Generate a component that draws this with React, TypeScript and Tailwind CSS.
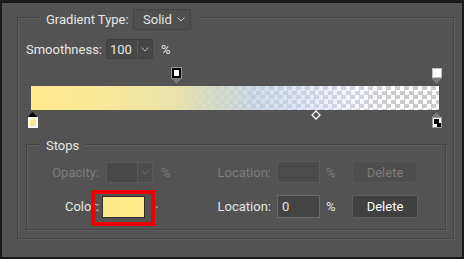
import React from "react";

function Chevron({ className = "" }: { className?: string }) {
  return (
    <svg width="8" height="5" viewBox="0 0 8 5" className={className}>
      <polyline points="0.5,0.5 4,4 7.5,0.5" fill="none" stroke="currentColor" strokeWidth="1" />
    </svg>
  );
}

function TriDown({ color }: { color: string }) {
  return (
    <svg width="11" height="6" viewBox="0 0 11 6">
      <polygon points="0,0 11,0 5.5,6" fill={color} />
    </svg>
  );
}

function TriUp({ color }: { color: string }) {
  return (
    <svg width="11" height="6" viewBox="0 0 11 6">
      <polygon points="0,6 11,6 5.5,0" fill={color} />
    </svg>
  );
}

export default function App() {
  return (
    <div className="w-[464px] h-[259px] bg-[#535353] border-t-[3px] border-b-[2px] border-l-2 border-r-2 border-[#1a1a1a] pt-[14px] pl-[15px] font-[Roboto,sans-serif] text-[13px] text-[#e6e6e6] overflow-hidden leading-none">
      <div className="w-[437px] h-[222px] border border-[#444444] shadow-[inset_1px_1px_0_#5e5e5e,1px_1px_0_#5e5e5e] flex flex-col">
        {/* Header: Gradient Type */}
        <div className="-mt-[9px] ml-[22px] px-[6px] bg-[#535353] w-fit h-[21px] flex items-center">
          <span className="w-[87px]">Gradient Type:</span>
          <div className="w-[58px] h-[21px] rounded-[2px] border border-[#434343] bg-[#4f4f4f] flex items-center pl-[9px] pr-[5px] justify-between">
            <span>Solid</span>
            <Chevron className="text-[#cfcfcf]" />
          </div>
        </div>

        {/* Smoothness */}
        <div className="mt-[9px] ml-[8px] h-[20px] flex items-center">
          <span className="w-[80px]">Smoothness:</span>
          <div className="w-[47px] h-[20px] flex border border-[#3f3f3f] bg-[#474747] rounded-[2px]">
            <div className="w-[31px] h-full flex items-center pl-[3px] border-r border-[#5b5b5b]">100</div>
            <div className="flex-1 flex items-center justify-center text-[#bdbdbd]">
              <Chevron />
            </div>
          </div>
          <span className="ml-[8px]">%</span>
        </div>

        {/* Gradient editor */}
        <div className="mt-[9px] ml-[13px] w-[408px] h-[60px] relative">
          {/* opacity stops */}
          <div className="absolute left-[141px] top-0 w-[9px] h-[10px] border-2 border-black bg-white outline outline-1 outline-[#9a9a9a]" />
          <div className="absolute left-[140px] top-[10px]">
            <TriDown color="#7a7a7a" />
          </div>
          <div className="absolute left-[401px] top-0 w-[10px] h-[10px] bg-white border border-[#bdbdbd]" />
          <div className="absolute left-[400px] top-[10px]">
            <TriDown color="#7a7a7a" />
          </div>

          {/* bar */}
          <div className="absolute left-0 top-[18px] w-[408px] h-[24px] bg-[conic-gradient(#cbcbcb_25%,#ffffff_0_50%,#cbcbcb_0_75%,#ffffff_0)] bg-[length:9px_9px]">
            <div className="w-full h-full bg-[linear-gradient(to_right,rgba(255,233,140,1)_0%,rgba(250,232,148,1)_15%,rgba(234,228,172,1)_35%,rgba(208,216,196,0.9)_45%,rgba(192,206,224,0.72)_55%,rgba(206,216,248,0.55)_67%,rgba(228,232,255,0.32)_79%,rgba(255,255,255,0)_91%)]" />
          </div>

          {/* color stops */}
          <div className="absolute left-[-4px] top-[44px]">
            <TriUp color="#000000" />
          </div>
          <div className="absolute left-[-3px] top-[49px] w-[10px] h-[11px] bg-white p-[2px]">
            <div className="w-full h-full bg-[#fbe68e]" />
          </div>
          <div className="absolute left-[280px] top-[42px]">
            <svg width="10" height="10" viewBox="0 0 10 10">
              <polygon points="5,1 9,5 5,9 1,5" fill="none" stroke="#ffffff" strokeWidth="1.3" />
            </svg>
          </div>
          <div className="absolute left-[400px] top-[44px]">
            <TriUp color="#7a7a7a" />
          </div>
          <div className="absolute left-[401px] top-[49px] w-[10px] h-[11px] bg-white border border-[#9a9a9a]">
            <div className="absolute left-[1px] top-[1px] w-[5px] h-[5px] bg-black" />
            <div className="absolute left-[4px] top-[5px] w-[4px] h-[4px] bg-black" />
          </div>
        </div>

        {/* Stops group */}
        <div className="mt-[16px] ml-[8px] w-[420px] h-[86px] border border-[#444444] shadow-[inset_1px_1px_0_#5e5e5e,1px_1px_0_#5e5e5e] flex flex-col">
          <div className="-mt-[8px] ml-[13px] px-[6px] bg-[#535353] w-fit h-[16px] flex items-center">Stops</div>

          {/* Opacity row (disabled) */}
          <div className="mt-[8px] h-[22px] flex items-center text-[#7c7c7c]">
            <span className="w-[72px] text-right">Opacity:</span>
            <div className="ml-[7px] w-[47px] h-[21px] flex border border-[#5a5a5a] bg-[#4c4c4c] rounded-[2px]">
              <div className="w-[31px] h-full bg-[#484848] border-r border-[#5a5a5a]" />
              <div className="flex-1 flex items-center justify-center text-[#6e6e6e]">
                <Chevron />
              </div>
            </div>
            <span className="ml-[8px] w-[12px]">%</span>
            <span className="w-[98px] text-right">Location:</span>
            <div className="ml-[6px] w-[43px] h-[22px] border border-[#5a5a5a] bg-[#4b4b4b]" />
            <span className="ml-[6px] w-[12px]">%</span>
            <div className="ml-[14px] w-[66px] h-[22px] flex items-center justify-center bg-[#4e4e4e] border border-[#575757] rounded-[2px]">Delete</div>
          </div>

          {/* Color row */}
          <div className="mt-[12px] h-[23px] flex items-center relative">
            <span className="w-[72px] text-right">Color:</span>
            <div className="ml-[3px] w-[43px] h-[22px] bg-[#ffe98a] border border-[#2e2e2e]" />
            <div className="w-[28px] flex items-center pl-[6px] gap-[3px]">
              <span className="w-[2px] h-[2px] bg-[#8a8a8a]" />
              <span className="w-[2px] h-[2px] bg-[#8a8a8a]" />
            </div>
            <span className="w-[98px] text-right">Location:</span>
            <div className="ml-[6px] w-[43px] h-[23px] border border-[#6a6a6a] bg-[#444444] flex items-center pl-[4px]">0</div>
            <span className="ml-[6px] w-[12px]">%</span>
            <div className="ml-[14px] w-[66px] h-[23px] flex items-center justify-center bg-[#404040] border border-[#5e5e5e] rounded-[2px] text-white">Delete</div>

            {/* annotation highlight */}
            <div className="absolute left-[64px] top-[-5px] w-[64px] h-[36px] border-4 border-[#ee0000]" />
          </div>
        </div>
      </div>
    </div>
  );
}
